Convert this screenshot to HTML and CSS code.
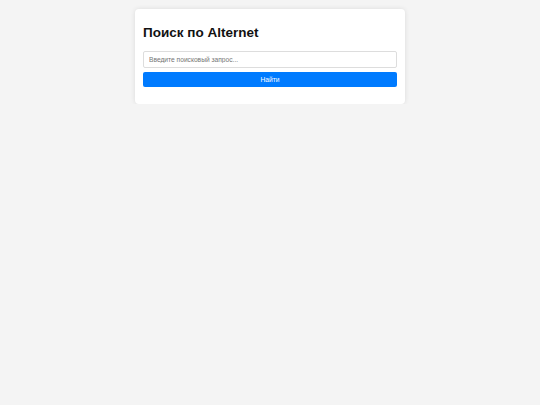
FILE: index.html
```html
<!DOCTYPE html>
<html lang="ru">
<head>
<meta charset="utf-8">
<title>Поиск по Alternet</title>
<link rel="stylesheet" href="styles.css">
</head>
<body>
<div class="card">
  <h1 class="title">Поиск по Alternet</h1>
  <form class="search">
    <input class="query" type="text" placeholder="Введите поисковый запрос...">
    <button class="submit" type="submit">Найти</button>
  </form>
</div>
</body>
</html>
```
FILE: styles.css
```css
html, body {
  margin: 0;
  padding: 0;
  background: #f4f4f4;
  font-family: "Liberation Sans", Arial, sans-serif;
}
body {
  padding-top: 9px;
}
.card {
  width: 270px;
  box-sizing: border-box;
  margin: 0 auto;
  background: #fff;
  border-radius: 4px;
  box-shadow: 0 0 5px rgba(0,0,0,0.1);
  padding: 16px 8px 17px;
}
.title {
  margin: 0 0 10px;
  font-size: 13.5px;
  line-height: 16px;
  font-weight: bold;
  color: #111;
}
.search {
  display: flex;
  flex-direction: column;
  gap: 4px;
  margin: 0;
}
.query {
  box-sizing: border-box;
  height: 17px;
  width: 100%;
  margin: 0;
  padding: 0 5px;
  border: 1px solid #ddd;
  border-radius: 2px;
  font-family: inherit;
  font-size: 6.67px;
  color: #333;
  outline: none;
}
.query::placeholder {
  color: #757575;
}
.submit {
  box-sizing: border-box;
  height: 15px;
  width: 100%;
  margin: 0;
  padding: 0;
  border: none;
  border-radius: 2px;
  background: #007bff;
  color: #fff;
  font-family: inherit;
  font-size: 6.67px;
  cursor: pointer;
}
```
